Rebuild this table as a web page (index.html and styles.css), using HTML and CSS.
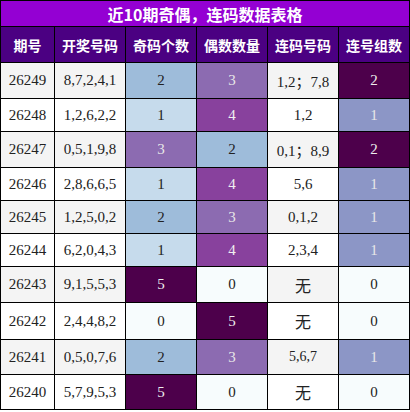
FILE: index.html
```html
<!DOCTYPE html>
<html lang="zh-CN">

<head>
    <meta charset="UTF-8">
    <meta name="viewport" content="width=device-width, initial-scale=1.0">
    <title>近10期奇偶，连码数据表格</title>
    <link rel="stylesheet" href="styles.css">
</head>

<body>
    <table class="data-table">
        <colgroup>
            <col class="col-issue">
            <col span="5">
        </colgroup>
        <thead>
            <tr class="title-row">
                <th colspan="6">近10期奇偶，连码数据表格</th>
            </tr>
            <tr class="head-row">
                <th>期号</th>
                <th>开奖号码</th>
                <th>奇码个数</th>
                <th>偶数数量</th>
                <th>连码号码</th>
                <th>连号组数</th>
            </tr>
        </thead>
        <tbody>
            <tr class="tall">
                <td>26249</td><td>8,7,2,4,1</td>
                <td class="c2">2</td><td class="c3">3</td>
                <td>1,2；7,8</td><td class="g2">2</td>
            </tr>
            <tr>
                <td>26248</td><td>1,2,6,2,2</td>
                <td class="c1">1</td><td class="c4">4</td>
                <td>1,2</td><td class="g1">1</td>
            </tr>
            <tr class="tall">
                <td>26247</td><td>0,5,1,9,8</td>
                <td class="c3">3</td><td class="c2">2</td>
                <td>0,1；8,9</td><td class="g2">2</td>
            </tr>
            <tr>
                <td>26246</td><td>2,8,6,6,5</td>
                <td class="c1">1</td><td class="c4">4</td>
                <td>5,6</td><td class="g1">1</td>
            </tr>
            <tr>
                <td>26245</td><td>1,2,5,0,2</td>
                <td class="c2">2</td><td class="c3">3</td>
                <td>0,1,2</td><td class="g1">1</td>
            </tr>
            <tr>
                <td>26244</td><td>6,2,0,4,3</td>
                <td class="c1">1</td><td class="c4">4</td>
                <td>2,3,4</td><td class="g1">1</td>
            </tr>
            <tr class="tall">
                <td>26243</td><td>9,1,5,5,3</td>
                <td class="c5">5</td><td class="c0">0</td>
                <td class="none">无</td><td class="g0">0</td>
            </tr>
            <tr class="taller">
                <td>26242</td><td>2,4,4,8,2</td>
                <td class="c0">0</td><td class="c5">5</td>
                <td class="none">无</td><td class="g0">0</td>
            </tr>
            <tr class="mid">
                <td>26241</td><td>0,5,0,7,6</td>
                <td class="c2">2</td><td class="c3">3</td>
                <td class="small">5,6,7</td><td class="g1">1</td>
            </tr>
            <tr class="mid">
                <td>26240</td><td>5,7,9,5,3</td>
                <td class="c5">5</td><td class="c0">0</td>
                <td class="none">无</td><td class="g0">0</td>
            </tr>
        </tbody>
    </table>
</body>

</html>
```

FILE: styles.css
```css
body {
    margin: 0;
    padding: 0;
    background-color: #fff;
}

.data-table {
    width: 410px;
    border-collapse: collapse;
    table-layout: fixed;
    font-family: "Liberation Serif", "Noto Sans CJK SC", serif;
    font-size: 15px;
    color: #222;
}

.data-table .col-issue {
    width: 54px;
}

.data-table th,
.data-table td {
    border: 1px solid #000;
    padding: 0;
    text-align: center;
    vertical-align: middle;
}

/* 제목 */
.title-row th {
    height: 25px;
    background-color: #9400d3;
    color: #fff;
    font-family: "Noto Sans CJK SC", sans-serif;
    font-size: 16px;
    font-weight: bold;
    line-height: 24px;
}

.head-row th {
    height: 35px;
    background-color: #4b0082;
    color: #fff;
    font-family: "Noto Sans CJK SC", sans-serif;
    font-size: 14px;
    font-weight: bold;
}

.data-table tbody tr {
    height: 33px;
    background-color: #fff;
}

.data-table tbody tr:nth-child(odd) {
    background-color: #f4f4f4;
}

.data-table tbody tr.tall {
    height: 36px;
}

.data-table tbody tr.taller {
    height: 37px;
}

.data-table tbody tr.mid {
    height: 35px;
}

.data-table td.none {
    font-family: "Noto Sans CJK SC", sans-serif;
    font-size: 16px;
}

.data-table td.small {
    font-size: 14px;
}

/* 개수 색상 */
.c0 { background-color: #f7fcfd; color: #222; }
.c1 { background-color: #c6dbec; color: #222; }
.c2 { background-color: #9ebcda; color: #222; }
.c3 { background-color: #8c6bb1; color: #e8e8e8; }
.c4 { background-color: #88419d; color: #f0f0f0; }
.c5 { background-color: #4d004b; color: #eee; }

.g0 { background-color: #f7fcfd; color: #222; }
.g1 { background-color: #8c96c6; color: #e8e8e8; }
.g2 { background-color: #4d004b; color: #eee; }
```
